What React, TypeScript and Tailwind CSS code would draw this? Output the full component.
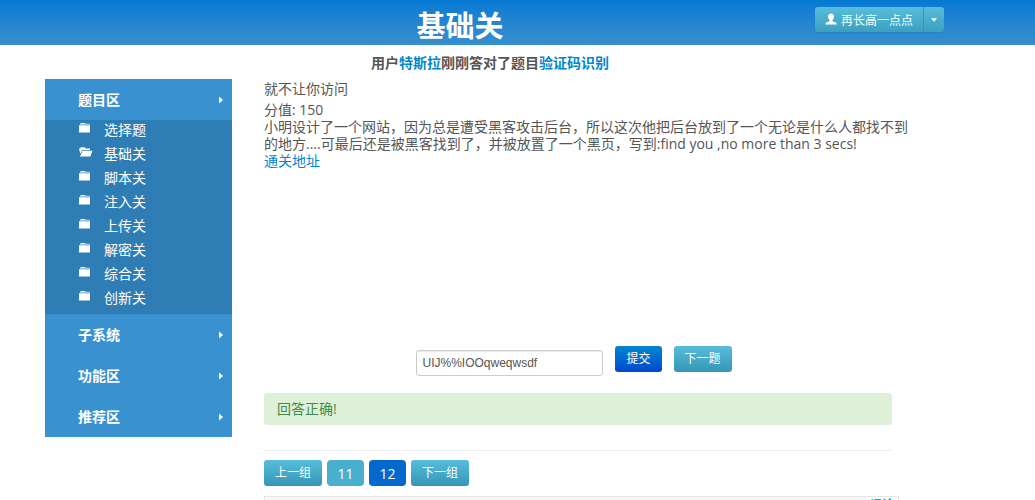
import { ReactNode } from "react";

const levels = ["选择题", "基础关", "脚本关", "注入关", "上传关", "解密关", "综合关", "创新关"];
const currentLevel = "基础关";

function FolderIcon({ open }: { open: boolean }) {
  if (open) {
    return (
      <svg className="mt-0.5 h-3 w-3.5 shrink-0" viewBox="0 0 14 12" fill="currentColor" aria-hidden="true">
        <path d="M0 2.4h1.200L1.800 1.200h4l.7 1.200H11v1.600H3.200L1.200 7.800z" />
        <path d="M3.600 4.700H13.400L11.400 10.600H1z" />
      </svg>
    );
  }
  return (
    <svg className="mt-0.5 h-3 w-3.5 shrink-0" viewBox="0 0 14 12" fill="currentColor" aria-hidden="true">
      <path d="M1.200 1.700 2 .9h3.600l.8.8h4.200v.9H.8z" />
      <path d="M0 3.200h11v6.800a.6.6 0 0 1-.6.600H.6A.6.6 0 0 1 0 10z" />
    </svg>
  );
}

function UserIcon() {
  return (
    <svg className="-mt-1 h-3 w-3 shrink-0" viewBox="0 0 12 12" fill="currentColor" aria-hidden="true">
      <path d="M6 .4c1.900 0 3 1.300 3 3.100 0 1.500-.7 2.800-1.500 3.500v.9c.2.500 3.600 1.200 4 2.300l.1 1.400H.4l.1-1.400c.4-1.100 3.800-1.800 4-2.300V7C3.700 6.300 3 5 3 3.500 3 1.700 4.100.4 6 .4z" />
    </svg>
  );
}

interface IMenuProps {
  title: string;
  children?: ReactNode;
}

function MenuSection({ title, children }: IMenuProps) {
  return (
    <li>
      <button
        type="button"
        className="flex h-[41px] w-full items-center justify-between bg-[#3991d0] pr-[9px] pl-[33px] text-[14px] font-bold"
      >
        {title}
        <svg className="h-2 w-1" viewBox="0 0 4 8" fill="currentColor" aria-hidden="true">
          <path d="M0 .5 4 4 0 7.500z" />
        </svg>
      </button>
      {children}
    </li>
  );
}

function Header() {
  return (
    <header className="flex h-[45px] items-center bg-linear-to-b from-[#0479d2] to-[#378fcd] pr-[91px] pl-[105px] text-white">
      <h1 className="flex-1 pt-1.5 text-center text-[29px] leading-10 font-bold">基础关</h1>
      <div className="-mt-1.5 flex h-[25px] overflow-hidden rounded-[3px] bg-linear-to-b from-[#58bddb] to-[#3ba0c0] text-[12px] shadow-xs">
        <button type="button" className="flex items-center gap-1 px-2.5 pt-0.5">
          <UserIcon />
          再长高一点点
        </button>
        <button type="button" aria-label="用户菜单" className="flex items-center border-l border-[#2f96b4] px-[7px]">
          <svg className="h-1 w-1.5" viewBox="0 0 6 4" fill="currentColor" aria-hidden="true">
            <path d="M0 .3h6L3 3.700z" />
          </svg>
        </button>
      </div>
    </header>
  );
}

function Sidebar() {
  return (
    <nav className="w-[187px] shrink-0 text-white">
      <ul>
        <MenuSection title="题目区">
          <ul className="flex flex-col gap-1 bg-[#2f7db5] pb-1.5 pl-[34px] text-[14px] leading-5">
            {levels.map((level) => (
              <li key={level}>
                <a href="#" className="flex gap-[11px]">
                  <FolderIcon open={level === currentLevel} />
                  {level}
                </a>
              </li>
            ))}
          </ul>
        </MenuSection>
        <MenuSection title="子系统" />
        <MenuSection title="功能区" />
        <MenuSection title="推荐区" />
      </ul>
    </nav>
  );
}

function Question() {
  return (
    <section className="min-h-[267px] text-[14px] leading-[17px]">
      <h2 className="leading-5">就不让你访问</h2>
      <p className="mt-0.5">分值: 150</p>
      <p className="whitespace-nowrap">
        小明设计了一个网站，因为总是遭受黑客攻击后台，所以这次他把后台放到了一个无论是什么人都找不到
        <br />
        的地方....可最后还是被黑客找到了，并被放置了一个黑页，写到:find you ,no more than 3 secs!
      </p>
      <a href="#" className="text-[#0088cc]">
        通关地址
      </a>
    </section>
  );
}

function AnswerForm() {
  return (
    <form className="flex items-start justify-center gap-3 pr-2 text-[12px]" onSubmit={(e) => e.preventDefault()}>
      <input
        type="text"
        aria-label="答案"
        defaultValue="UIJ%%IOOqweqwsdf"
        className="mt-1 h-[26px] w-[187px] rounded-[3px] border border-[#ccc] px-[5px] font-['Liberation_Sans',sans-serif] text-[12px] text-[#555] shadow-[inset_0_1px_1px_rgba(0,0,0,0.075)]"
      />
      <button type="submit" className="h-[26px] rounded-[3px] bg-linear-to-b from-[#0585cf] to-[#0447cc] px-[11px] text-white">
        提交
      </button>
      <button type="button" className="h-[26px] rounded-[3px] bg-linear-to-b from-[#58bddb] to-[#3296b4] px-[11px] text-white">
        下一题
      </button>
    </form>
  );
}

function Pager() {
  return (
    <div className="flex gap-[5px] text-[12px] text-white">
      <button type="button" className="h-[26px] rounded-[3px] bg-linear-to-b from-[#58bddb] to-[#3296b4] px-[11px]">
        上一组
      </button>
      <button type="button" className="h-[26px] w-[37px] rounded bg-[#49afcd] text-[14px]">
        11
      </button>
      <button type="button" aria-current="page" className="h-[26px] w-[37px] rounded bg-[#0468cc] text-[14px]">
        12
      </button>
      <button type="button" className="h-[26px] rounded-[3px] bg-linear-to-b from-[#58bddb] to-[#3296b4] px-[11px]">
        下一组
      </button>
    </div>
  );
}

export default function App() {
  return (
    <div className="flex h-screen flex-col overflow-hidden bg-white font-['Open_Sans','Noto_Sans_CJK_SC',sans-serif] text-[#555]">
      <Header />
      <p className="pt-2 pr-[55px] text-center text-[14px] leading-5 font-bold">
        用户
        <a href="#" className="text-[#0088cc]">
          特斯拉
        </a>
        刚刚答对了题目
        <a href="#" className="text-[#0088cc]">
          验证码识别
        </a>
      </p>
      <div className="mt-1.5 flex min-h-0 flex-1 gap-8 pr-[136px] pl-[45px]">
        <Sidebar />
        <main className="flex min-w-0 flex-1 flex-col">
          <div className="pr-[7px]">
            <Question />
            <AnswerForm />
            <p role="status" className="mt-[17px] rounded-[3px] bg-[#dff0d8] px-[13px] py-1.5 text-[14px] leading-5 text-[#468847]">
              回答正确!
            </p>
            <hr className="mt-[25px] mb-[9px] border-[#eee]" />
            <Pager />
          </div>
          <div className="mt-2.5 flex min-h-0 flex-1 justify-end overflow-hidden border border-b-0 border-[#e5e5e5] bg-[#f7f7f7] text-[12px] leading-4">
            <a href="#" className="bg-white px-1 text-[#0088cc]">
              评论
            </a>
          </div>
        </main>
      </div>
    </div>
  );
}
